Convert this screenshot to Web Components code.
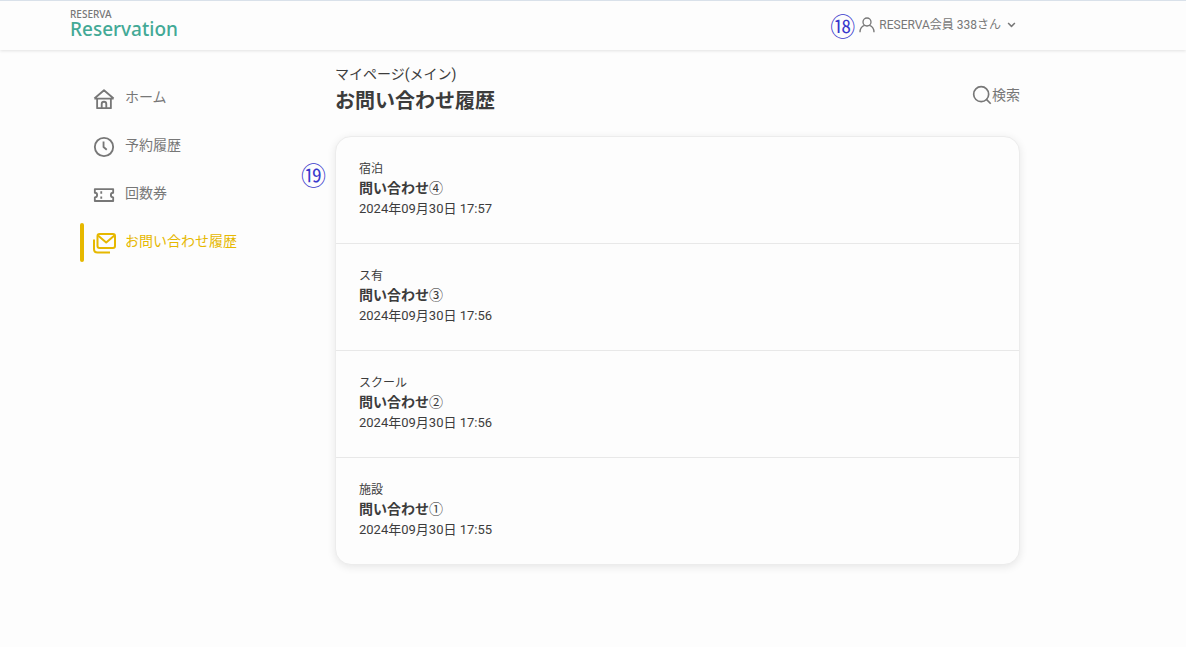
<!DOCTYPE html>
<html lang="ja">
<head>
<meta charset="utf-8">
<meta name="viewport" content="width=device-width, initial-scale=1">
<title>お問い合わせ履歴 | RESERVA Reservation</title>
<style>
html { background: #fdfdfd; }
body { margin: 0; font-family: Roboto, "Noto Sans CJK JP", sans-serif; font-size: 14px; line-height: 20px; color: #3c3c3c; }
</style>
</head>
<body>
<app-shell></app-shell>
<script>
const define = (name, html, setup) => customElements.define(name, class extends HTMLElement {
  constructor() {
    super();
    const t = document.createElement('template');
    t.innerHTML = html;
    this.attachShadow({ mode: 'open' }).append(t.content.cloneNode(true));
  }
  connectedCallback() { if (setup) setup(this, this.shadowRoot); }
});

const icons = {
  home: '<path d="M1.500 11.500 12 2.500l10.500 9M1.500 11.500H22.500M4.500 11.500v10.500h15V11.500M9.500 21v-3.500a2.500 2.500 0 0 1 5 0V21"/>',
  clock: '<circle cx="12" cy="12" r="10"/><path d="M11.500 6v6l3.500 3"/>',
  ticket: '<path d="M2 5.500h20v4a2.500 2.500 0 0 0 0 5v4H2v-4a2.500 2.500 0 0 0 0-5z"/><path d="M9 8v2.500M9 13.500V16"/>',
  mail: '<rect x="5.500" y="3" width="17.500" height="14" rx="2"/><path d="m6 4.500 8.200 7 8.200-7M2 8.500V18q0 3.500 3.500 3.500H18"/>',
  user: '<circle cx="12" cy="7.500" r="6"/><path d="M1.500 23q0-8.500 7-10.500M15.500 12.500q7 2 7 10.500"/>',
  search: '<circle cx="11" cy="11" r="9"/><path d="m17 17 5.500 5.500"/>',
  chevron: '<path d="m3 8 9 9 9-9"/>'
};

define('ui-icon', `<style>
:host { display: block; flex: none; width: var(--icon-size, 22px); height: var(--icon-size, 22px); }
svg { display: block; width: 100%; height: 100%; fill: none; stroke: currentColor; stroke-width: var(--icon-stroke, 2); stroke-linejoin: round; }
</style><svg viewBox="0 0 24 24" aria-hidden="true"></svg>`,
  (el, root) => { root.querySelector('svg').innerHTML = icons[el.getAttribute('name')]; });

define('note-mark', `<style>
:host { display: block; font: 350 25px/24px "Noto Sans CJK JP", sans-serif; color: #3838cc; }
</style><slot></slot>`);

define('brand-logo', `<style>
:host { display: block; }
a { display: block; text-decoration: none; color: #43a996; }
small { display: block; font: 500 10px/10px "Noto Sans", sans-serif; color: #777; }
span { display: block; font: 500 19px/20px "Noto Sans", sans-serif; }
</style><a href="#"><small>RESERVA</small><span>Reservation</span></a>`);

define('account-menu', `<style>
:host { display: flex; align-items: center; gap: 4px; color: #777; }
note-mark { padding-bottom: 2px; }
button { display: flex; align-items: center; gap: 4px; padding: 0 0 2px; border: 0; background: none; font: 12px/20px Roboto, "Noto Sans CJK JP", sans-serif; color: inherit; cursor: pointer; }
.user { --icon-size: 16px; }
.chevron { --icon-size: 9px; --icon-stroke: 4; margin-left: 2px; }
</style><note-mark>⑱</note-mark>
<button type="button" aria-haspopup="menu"><ui-icon class="user" name="user"></ui-icon><slot></slot><ui-icon class="chevron" name="chevron"></ui-icon></button>`);

define('site-header', `<style>
:host { display: block; border-top: 1px solid #d9e1ea; background: #fdfdfd; box-shadow: 0 1px 3px #0000001c; }
header { display: flex; align-items: center; justify-content: space-between; height: 49px; padding: 0 170px 0 70px; }
brand-logo { margin-bottom: 4px; }
</style><header><brand-logo></brand-logo><account-menu>RESERVA会員 338さん</account-menu></header>`);

define('nav-item', `<style>
:host { display: block; color: #777; }
:host([active]) { color: #e6b800; }
a { display: flex; align-items: center; gap: 8px; height: 39px; color: inherit; text-decoration: none; }
.bar { width: 4px; height: 39px; border-radius: 2px; }
:host([active]) .bar { background: currentColor; }
.icon { display: flex; width: 24px; justify-content: center; }
.label { padding: 0 0 3px 1px; }
:host([active]) .icon { --icon-size: 24px; }
</style><a href="#"><span class="bar"></span><span class="icon"><ui-icon></ui-icon></span><span class="label"><slot></slot></span></a>`,
  (el, root) => {
    const icon = document.createElement('ui-icon');
    icon.setAttribute('name', el.getAttribute('icon'));
    root.querySelector('ui-icon').replaceWith(icon);
    if (el.hasAttribute('active')) root.querySelector('a').setAttribute('aria-current', 'page');
  });

define('side-nav', `<style>
:host { display: block; }
nav { display: flex; flex-direction: column; gap: 9px; }
</style><nav aria-label="メニュー">
<nav-item icon="home">ホーム</nav-item>
<nav-item icon="clock">予約履歴</nav-item>
<nav-item icon="ticket">回数券</nav-item>
<nav-item icon="mail" active>お問い合わせ履歴</nav-item>
</nav>`);

define('page-heading', `<style>
:host { display: flex; justify-content: space-between; align-items: flex-end; }
p { margin: 0; font-size: 14px; line-height: 20px; }
h1 { margin: 2px 0 0; font-size: 20px; line-height: 30px; font-weight: 700; }
button { display: flex; align-items: center; padding: 0; border: 0; margin-bottom: 11px; background: none; font: 14px/20px Roboto, "Noto Sans CJK JP", sans-serif; color: #777; cursor: pointer; --icon-size: 20px; }
</style><div><p>マイページ(メイン)</p><h1><slot></slot></h1></div>
<button type="button"><ui-icon name="search"></ui-icon>検索</button>`);

define('inquiry-item', `<style>
:host { display: block; padding: 22px 24px 23px 23px; }
.place { font-size: 12px; line-height: 20px; }
h2 { margin: 0; font-size: 14px; line-height: 19px; font-weight: 700; }
h2 slot[name] { font-weight: 400; }
time { display: block; font-size: 13px; line-height: 22px; }
</style><div class="place"><slot name="place"></slot></div><h2><slot></slot><slot name="number"></slot></h2><time><slot name="date"></slot></time>`);

define('inquiry-list', `<style>
:host { display: block; position: relative; border: 1px solid #ececec; border-radius: 16px; background: #fdfdfd; box-shadow: 0 2px 8px #00000018; }
inquiry-item + inquiry-item { border-top: 1px solid #e8e8e8; }
note-mark { position: absolute; top: 25px; left: -35px; }
</style><note-mark>⑲</note-mark>
<inquiry-item><span slot="place">宿泊</span>問い合わせ<span slot="number">④</span><span slot="date">2024年09月30日 17:57</span></inquiry-item>
<inquiry-item><span slot="place">ス有</span>問い合わせ<span slot="number">③</span><span slot="date">2024年09月30日 17:56</span></inquiry-item>
<inquiry-item><span slot="place">スクール</span>問い合わせ<span slot="number">②</span><span slot="date">2024年09月30日 17:56</span></inquiry-item>
<inquiry-item><span slot="place">施設</span>問い合わせ<span slot="number">①</span><span slot="date">2024年09月30日 17:55</span></inquiry-item>`);

define('app-shell', `<style>
:host { display: block; }
.page { display: grid; grid-template-columns: 255px minmax(0, 1fr); padding: 14px 166px 40px 80px; }
side-nav { padding-top: 15px; }
inquiry-list { margin-top: 20px; }
</style><site-header></site-header>
<div class="page"><side-nav></side-nav><main><page-heading>お問い合わせ履歴</page-heading><inquiry-list></inquiry-list></main></div>`);
</script>
</body>
</html>
